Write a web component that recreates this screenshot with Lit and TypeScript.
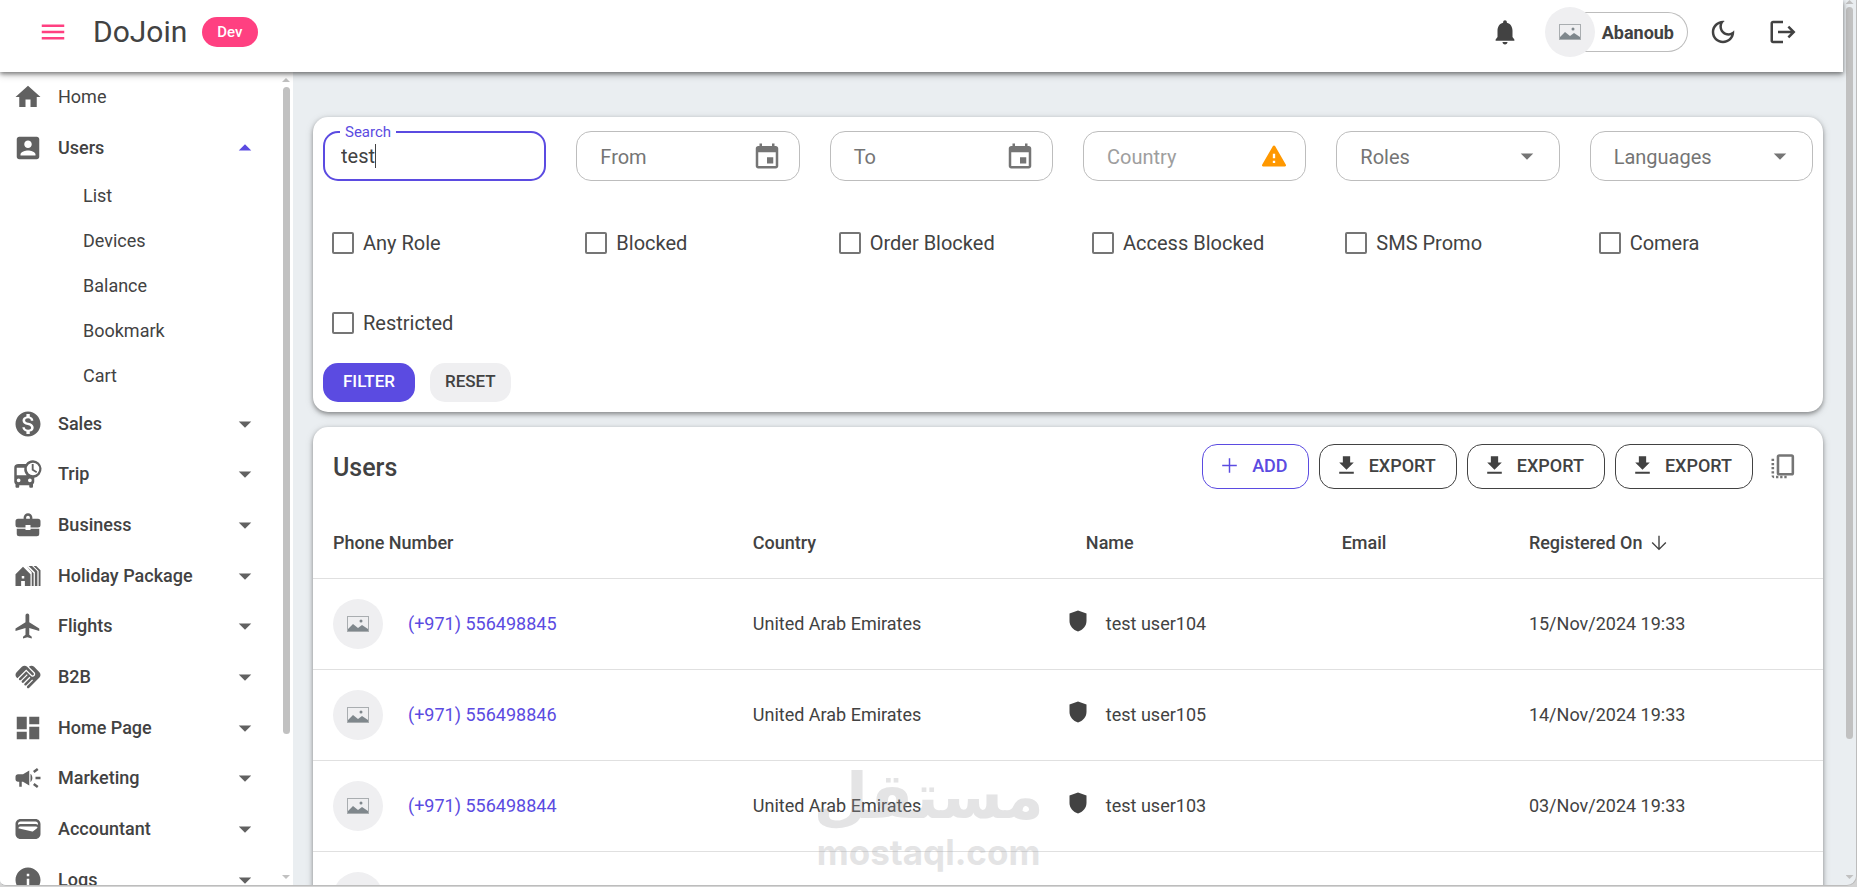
import { LitElement, html, css, svg } from "lit";
import { customElement } from "lit/decorators.js";
import { classMap } from "lit/directives/class-map.js";

const icons = {
  menu: svg`<path d="M3 18h18v-2H3v2zm0-5h18v-2H3v2zm0-7v2h18V6H3z"/>`,
  home: svg`<path d="M10 20v-6h4v6h5v-8h3L12 3 2 12h3v8z"/>`,
  users: svg`<path d="M3 5v14c0 1.1.89 2 2 2h14c1.1 0 2-.9 2-2V5c0-1.1-.9-2-2-2H5c-1.11 0-2 .9-2 2zm12 4c0 1.66-1.34 3-3 3s-3-1.34-3-3 1.34-3 3-3 3 1.34 3 3zm-9 8c0-2 4-3.1 6-3.1s6 1.1 6 3.1v1H6v-1z"/>`,
  sales: svg`<path d="M12 2C6.48 2 2 6.48 2 12s4.48 10 10 10 10-4.48 10-10S17.52 2 12 2zm1.41 16.09V20h-2.67v-1.93c-1.71-.36-3.16-1.46-3.27-3.4h1.96c.1 1.05.82 1.87 2.65 1.87 1.96 0 2.4-.98 2.4-1.59 0-.83-.44-1.61-2.67-2.14-2.48-.6-4.18-1.62-4.18-3.67 0-1.72 1.39-2.84 3.11-3.21V4h2.67v1.95c1.86.45 2.79 1.86 2.85 3.39H14.3c-.05-1.11-.64-1.87-2.22-1.87-1.5 0-2.4.68-2.4 1.64 0 .84.65 1.39 2.67 1.91s4.18 1.39 4.18 3.91c-.01 1.83-1.38 2.83-3.12 3.16z"/>`,
  trip: svg`<path d="M16 1a7 7 0 0 0-5.700 3H4.500C2.200 4 1 5 1 7v11c0 .9.400 1.600 1 2.200V22c0 .6.400 1 1 1h1c.6 0 1-.4 1-1v-1h8v1c0 .6.400 1 1 1h1c.6 0 1-.4 1-1v-1.800c.6-.6 1-1.300 1-2.200v-3.100A7 7 0 0 0 16 1zM4.500 18.500a1.500 1.500 0 1 1 0-3 1.500 1.500 0 0 1 0 3zM3 13V7h6.100a7 7 0 0 0 1.800 6zm10.500 5.500a1.500 1.500 0 1 1 0-3 1.500 1.500 0 0 1 0 3zM16 13a5 5 0 1 1 0-10 5 5 0 0 1 0 10zm.5-9H15v5l3.600 2.100.7-1.200-2.800-1.700z"/>`,
  business: svg`<path fill-rule="evenodd" d="M4 7h4.500V6a3.500 3.500 0 0 1 7 0v1H20a2 2 0 0 1 2 2v3a2 2 0 0 1-2 2h-6v-2h-4v2H4a2 2 0 0 1-2-2V9a2 2 0 0 1 2-2zm6.500 0h3V6a1.500 1.500 0 0 0-3 0zM3 15h7v1h4v-1h7v4a2 2 0 0 1-2 2H5a2 2 0 0 1-2-2z"/>`,
  holiday: svg`<path d="M2 10.500V20h4.500v-4h3v4H14v-9.500L8 4.500zM9 14H7v-2h2zM17.500 20V9l-5-5h2.800l4.200 4.200V20h-2zM16.500 20V9.800l-5.200-5.300h-.1L15 8.900V20zM20.500 20V8l-4-4h2.100L22 7.300V20z"/>`,
  flights: svg`<path d="M21 16v-2l-8-5V3.500c0-.83-.67-1.500-1.500-1.500S10 2.670 10 3.500V9l-8 5v2l8-2.500V19l-2 1.500V22l3.500-1 3.500 1v-1.500L13 19v-5.500l8 2.500z"/>`,
  b2b: svg`<path d="M16.480 10.410c-.39.39-1.040.39-1.430 0l-4.470-4.460-7.050 7.040-.66-.63c-1.170-1.170-1.170-3.070 0-4.240l4.240-4.240c1.170-1.170 3.070-1.170 4.240 0L16.480 9c.39.39.39 1.020 0 1.410zm.7-2.120c.78.78.78 2.050 0 2.830-1.270 1.270-2.610.22-2.830 0l-3.760-3.760-5.570 5.570c-.39.39-.39 1.020 0 1.410s1.020.39 1.420 0l4.620-4.620.71.71-4.620 4.620c-.39.39-.39 1.020 0 1.410s1.020.39 1.420 0l4.620-4.620.71.71-4.620 4.620c-.39.39-.39 1.020 0 1.410.39.39 1.020.39 1.410 0l4.620-4.620.71.71-4.620 4.620c-.39.39-.39 1.020 0 1.410.39.39 1.020.39 1.410 0l8.320-8.340c1.170-1.170 1.170-3.070 0-4.240l-4.240-4.240c-1.150-1.150-3.010-1.170-4.180-.06l4.470 4.470z"/>`,
  homepage: svg`<path d="M3 13h8V3H3v10zm0 8h8v-6H3v6zm10 0h8V11h-8v10zm0-18v6h8V3h-8z"/>`,
  marketing: svg`<path d="M18 11v2h4v-2h-4zM16 17.610c.96.71 2.210 1.650 3.200 2.390.4-.53.8-1.070 1.200-1.600-.99-.74-2.240-1.680-3.200-2.400-.4.540-.8 1.080-1.200 1.610zM20.400 5.600c-.4-.53-.8-1.070-1.200-1.600-.99.74-2.240 1.680-3.200 2.400.4.530.8 1.070 1.200 1.600.96-.72 2.210-1.650 3.200-2.400zM4 9c-1.100 0-2 .9-2 2v2c0 1.100.9 2 2 2h1v4h2v-4h1l5 3V6L8 9H4zm11.500 3c0-1.330-.58-2.530-1.500-3.350v6.690c.92-.81 1.500-2.010 1.500-3.340z"/>`,
  accountant: svg`<path d="M18 4H6C3.800 4 2 5.800 2 8v8c0 2.200 1.800 4 4 4h12c2.200 0 4-1.800 4-4V8c0-2.200-1.800-4-4-4zm-1.900 9.800c-.2.200-.5.300-.8.200L4.200 11.300C4.500 10.500 5.200 10 6 10h12c.7 0 1.300.4 1.700.9zM20 8.600c-.6-.4-1.300-.6-2-.6H6c-.7 0-1.400.2-2 .6V8c0-1.100.9-2 2-2h12c1.100 0 2 .9 2 2z"/>`,
  info: svg`<path d="M12 2C6.480 2 2 6.480 2 12s4.480 10 10 10 10-4.480 10-10S17.520 2 12 2zm1 15h-2v-6h2v6zm0-8h-2V7h2v2z"/>`,
  down: svg`<path d="M7 10l5 5 5-5z"/>`,
  up: svg`<path d="M7 14l5-5 5 5z"/>`,
  bell: svg`<path d="M12 22c1.100 0 2-.9 2-2h-4c0 1.100.89 2 2 2zm6-6v-5c0-3.070-1.640-5.640-4.500-6.320V4c0-.83-.67-1.500-1.500-1.500s-1.500.67-1.500 1.500v.68C7.630 5.360 6 7.920 6 11v5l-1.500 2v1h15v-1l-1.500-2z"/>`,
  moon: svg`<path d="M9.370 5.510c-.18.640-.27 1.310-.27 1.990 0 4.080 3.320 7.400 7.400 7.400.68 0 1.350-.09 1.990-.27C17.450 17.190 14.930 19 12 19c-3.860 0-7-3.140-7-7 0-2.930 1.810-5.450 4.370-6.490zM12 3c-4.970 0-9 4.030-9 9s4.030 9 9 9 9-4.030 9-9c0-.46-.04-.92-.1-1.360-.98 1.370-2.580 2.260-4.400 2.260-2.980 0-5.400-2.420-5.400-5.400 0-1.810.89-3.420 2.260-4.400-.44-.06-.9-.1-1.360-.1z"/>`,
  logout: svg`<path d="M17 7l-1.410 1.410L18.170 11H8v2h10.170l-2.580 2.580L17 17l5-5zM4 5h8V3H4c-1.100 0-2 .9-2 2v14c0 1.100.9 2 2 2h8v-2H4V5z"/>`,
  calendar: svg`<path d="M19 4h-1V2h-2v2H8V2H6v2H5c-1.110 0-1.990.9-1.990 2L3 20c0 1.100.89 2 2 2h14c1.100 0 2-.9 2-2V6c0-1.100-.9-2-2-2zm0 16H5V9h14v11zm-7-7h5v5h-5z"/>`,
  warning: svg`<path d="M2.700 21h18.600c.8 0 1.200-.8.900-1.500L12.900 3.500c-.4-.7-1.400-.7-1.800 0L1.800 19.500c-.3.700.1 1.500.9 1.500zM13 18h-2v-2h2v2zm0-4h-2v-4h2v4z"/>`,
  add: svg`<path d="M19 12.700h-6.300V19h-1.400v-6.300H5v-1.400h6.300V5h1.400v6.300H19z"/>`,
  download: svg`<path d="M19 9h-3.500V3h-7v6H5l7 7 7-7zM5 18v2h14v-2H5z"/>`,
  columns: svg`<rect x="8.500" y="3.500" width="11.500" height="14.500" rx="1" fill="none" stroke="currentColor" stroke-width="2"/><path d="M3.500 6h2v1.800h-2zM3.500 9.200h2V11h-2zM3.500 12.400h2v1.800h-2zM3.500 15.600h2v1.800h-2zM3.500 19h2v2c-1.100 0-2-.9-2-2zM7 19.200h1.800V21H7zM10.200 19.200H12V21h-1.800zM13.400 19.200h1.800V21h-1.800z"/>`,
  arrow: svg`<path d="M20 12l-1.060-1.060-6.190 6.190V4h-1.500v13.130l-6.190-6.190L4 12l8 8 8-8z"/>`,
  shield: svg`<path d="M12 1.500 3.500 4.500V12c0 5 3.600 9 8.500 10.500 4.900-1.500 8.500-5.500 8.500-10.500V4.500z"/>`,
};
type IconName = keyof typeof icons;

const icon = (name: IconName, cls = "") =>
  html`<svg class="icon ${cls}" viewBox="0 0 24 24" aria-hidden="true">${icons[name]}</svg>`;

const picture = () => html`<span class="avatar">
  <svg class="picture" viewBox="0 0 22 16" aria-hidden="true">
    <rect x="0.500" y="0.500" width="21" height="15" fill="none" stroke="#a9adb0" />
    <path d="M1 15v-2l5-5 5 4 4-3 6 4v2z" fill="#7f878c" />
    <circle cx="14" cy="5" r="1.500" fill="#7f878c" />
  </svg>
</span>`;

interface Group { label: string; icon: IconName; children?: string[]; leaf?: boolean }
const groups: Group[] = [
  { label: "Home", icon: "home", leaf: true },
  { label: "Users", icon: "users", children: ["List", "Devices", "Balance", "Bookmark", "Cart"] },
  { label: "Sales", icon: "sales" },
  { label: "Trip", icon: "trip" },
  { label: "Business", icon: "business" },
  { label: "Holiday Package", icon: "holiday" },
  { label: "Flights", icon: "flights" },
  { label: "B2B", icon: "b2b" },
  { label: "Home Page", icon: "homepage" },
  { label: "Marketing", icon: "marketing" },
  { label: "Accountant", icon: "accountant" },
  { label: "Logs", icon: "info" },
];

const flags = ["Any Role", "Blocked", "Order Blocked", "Access Blocked", "SMS Promo", "Comera", "Restricted"];

const users = [
  { phone: "(+971) 556498845", country: "United Arab Emirates", name: "test user104", date: "15/Nov/2024 19:33" },
  { phone: "(+971) 556498846", country: "United Arab Emirates", name: "test user105", date: "14/Nov/2024 19:33" },
  { phone: "(+971) 556498844", country: "United Arab Emirates", name: "test user103", date: "03/Nov/2024 19:33" },
  { phone: "", country: "", name: "", date: "" },
];

@customElement("app-root")
export class AppRoot extends LitElement {
  static styles = css`
    :host {
      display: flex;
      flex-direction: column;
      box-sizing: border-box;
      position: relative;
      height: 100vh;
      overflow: hidden;
      padding-bottom: 1px;
      background: #d4d4d4;
      color: #424242;
      font: 400 18px/24px Roboto, "Open Sans", sans-serif;
    }
    * { box-sizing: border-box; }
    button, input, select { font: inherit; color: inherit; margin: 0; }
    button { border: 0; background: none; padding: 0; cursor: pointer; }
    a { color: inherit; text-decoration: none; }
    ul { list-style: none; margin: 0; padding: 0; }
    .icon { width: 30px; height: 30px; fill: currentColor; flex: none; display: block; }

    .shell {
      flex: 1;
      min-height: 0;
      display: flex;
      overflow: hidden;
      border: solid #bdbdbd;
      border-width: 0 1px 1px 0;
      border-radius: 0 0 10px 6px;
      background: #eaeef1;
    }
    .page { flex: 1; min-width: 0; display: flex; flex-direction: column; }
    .header {
      display: flex;
      align-items: center;
      flex: none;
      height: 72px;
      padding: 0 45px 8px 38px;
      background: #fff;
      box-shadow: 0 2px 4px rgba(0, 0, 0, 0.4), 0 3px 8px rgba(0, 0, 0, 0.2);
      z-index: 2;
    }
    .burger { color: #ff4081; }
    .brand { margin: 0 15px 0 25px; font-size: 30px; line-height: 40px; font-weight: 400; }
    .chip {
      padding: 0 15px;
      border-radius: 15px;
      background: #ff4081;
      color: #fff;
      font-size: 15px;
      line-height: 30px;
      font-weight: 500;
    }
    .actions { margin-left: auto; display: flex; align-items: center; }
    .profile { display: flex; align-items: center; margin: 0 20px 0 25px; font-weight: 700; }
    .profile-name {
      height: 40px;
      line-height: 39px;
      margin-left: -20px;
      padding: 0 13px 0 27px;
      border: 1px solid #bdbdbd;
      border-left: 0;
      border-radius: 0 20px 20px 0;
    }
    .logout { margin-left: 30px; }
    .avatar {
      display: flex;
      align-items: center;
      justify-content: center;
      flex: none;
      width: 50px;
      height: 50px;
      border-radius: 50%;
      background: #efeff1;
      z-index: 1;
    }
    .picture { width: 22px; height: 16px; }

    .body { flex: 1; min-height: 0; display: flex; }
    .sidebar {
      display: flex;
      width: 293px;
      flex: none;
      overflow: hidden;
      background: #fff;
    }
    .menu { flex: 1; }
    .row {
      display: flex;
      align-items: center;
      width: 100%;
      height: 51px;
      padding: 0 19px 0 13px;
      font-weight: 500;
      text-align: left;
    }
    .group:nth-child(3n + 1) .row { height: 50px; }
    .row.leaf { font-weight: 400; }
    .row-icon { color: #616161; margin-right: 15px; }
    .caret { margin-left: auto; color: #616161; }
    .caret.open { color: #5b4be1; }
    .child { display: block; padding-left: 83px; line-height: 45px; }

    .scroll {
      display: flex;
      flex-direction: column;
      align-items: center;
      justify-content: space-between;
      flex: none;
    }
    .side-scroll { width: 14px; padding: 6px 0; }
    .page-scroll { width: 13px; padding: 0 0 6px; }
    .thumb { width: 7px; border-radius: 4px; background: #c1c1c1; }
    .side-scroll .thumb { flex: 0 0 80.8%; margin: 5px 0 auto; }
    .page-scroll .thumb { flex: 0 0 83.3%; margin: 3px 0 auto; }
    .tip { width: 8px; height: 4px; background: #c1c1c1; }
    .tip-up { clip-path: polygon(50% 0, 100% 100%, 0 100%); }
    .tip-down { clip-path: polygon(0 0, 100% 0, 50% 100%); }

    .main {
      flex: 1;
      min-width: 0;
      display: flex;
      flex-direction: column;
      gap: 15px;
      padding: 45px 20px 0;
      overflow: hidden;
    }
    .card {
      flex: none;
      border-radius: 15px;
      background: #fff;
      box-shadow: 0 2px 4px rgba(0, 0, 0, 0.35), 0 2px 8px rgba(0, 0, 0, 0.15);
    }
    .filters { padding: 14px 10px 10px; }
    .fields, .flags { display: grid; grid-template-columns: repeat(6, minmax(0, 1fr)); column-gap: 30px; }
    .fields { margin-bottom: 22px; }
    .field {
      display: grid;
      grid-template-columns: minmax(0, 1fr) auto;
      align-items: center;
      position: relative;
      height: 50px;
      padding: 0 17px 0 23px;
      border: 1px solid #bdbdbd;
      border-radius: 15px;
      color: #757575;
      font-size: 20px;
    }
    .field.active { border: 2px solid #5b4be1; padding: 0 16px; color: #424242; }
    .field.disabled { color: #9e9e9e; }
    .label { grid-area: 1 / 1; padding-top: 2px; pointer-events: none; }
    .legend {
      position: absolute;
      top: -11px;
      left: 15px;
      padding: 0 5px;
      background: #fff;
      color: #5b4be1;
      font-size: 15px;
      line-height: 20px;
    }
    .control { grid-area: 1 / 1; width: 100%; height: 28px; padding: 0; border: 0; outline: 0; background: none; appearance: none; }
    .active .control { caret-color: transparent; }
    .cursor { position: absolute; left: 50px; top: 11px; width: 1px; height: 24px; background: #424242; }
    .warning { color: #ff9800; width: 28px; height: 28px; }
    .flag { display: flex; align-items: center; height: 80px; padding-left: 9px; gap: 9px; font-size: 20px; }
    .box { appearance: none; width: 22px; height: 22px; border: 2px solid #757575; border-radius: 2px; }
    .buttons { display: flex; gap: 15px; }
    .filter-button {
      height: 39px;
      padding: 0 20px;
      border-radius: 15px;
      background: #5b4be1;
      color: #fff;
      font-size: 17px;
      line-height: 37px;
      padding-bottom: 2px;
      font-weight: 500;
    }
    .filter-button.reset { padding: 0 15px 2px; background: #efeff1; color: #424242; }

    .toolbar { display: flex; align-items: center; gap: 10px; padding: 17px 25px 0 20px; }
    .title { margin: 0 auto 0 0; padding-top: 2px; font-size: 25px; line-height: 32px; font-weight: 500; }
    .outlined {
      display: flex;
      align-items: center;
      gap: 10px;
      height: 45px;
      padding: 0 20px 2px 14px;
      border: 1px solid #424242;
      border-radius: 15px;
      font-weight: 500;
    }
    .outlined .icon { width: 25px; height: 25px; }
    .add { color: #5b4be1; border-color: #5b4be1; }
    .columns { color: #757575; padding-left: 4px; }
    .columns .icon { width: 31px; height: 31px; }

    .table { width: 100%; border-collapse: collapse; table-layout: fixed; }
    .table th { height: 89px; padding: 36px 20px 16px; text-align: left; font-weight: 500; border-bottom: 1px solid #e0e0e0; }
    .table td { height: 91px; padding: 0 20px; border-bottom: 1px solid #e0e0e0; }
    .table .name-head { padding-left: 36px; }
    .c-phone { width: 27.8%; }
    .c-country { width: 21%; }
    .c-name { width: 18%; }
    .c-email { width: 12.4%; }
    .cell { display: flex; align-items: center; }
    .phone { color: #5b4be1; gap: 25px; }
    .person { gap: 20px; }
    .sort { gap: 6px; }
    .sort .icon { width: 22px; height: 22px; }
    .person .icon { width: 24px; height: 24px; margin: 0 -4px 6px; }

    .watermark {
      position: absolute;
      left: 44%;
      bottom: 15px;
      width: 223px;
      display: flex;
      flex-direction: column;
      align-items: center;
      color: #a0a0a4;
      opacity: 0.28;
      font-weight: 700;
      white-space: nowrap;
      pointer-events: none;
    }
    .wm-ar { font-family: "DejaVu Sans", sans-serif; font-size: 63px; line-height: 70px; }
    .wm-en { font-family: Inter, sans-serif; font-size: 35px; line-height: 40px; }
  `;

  firstUpdated() {
    const search = this.renderRoot.querySelector<HTMLInputElement>("#search");
    search?.focus();
    search?.setSelectionRange(search.value.length, search.value.length);
  }

  private renderGroup(g: Group) {
    const inner = html`${icon(g.icon, "row-icon")}<span>${g.label}</span>`;
    if (g.leaf) return html`<li class="group"><a class="row leaf" href="#">${inner}</a></li>`;
    const open = !!g.children;
    return html`<li class="group">
      <button class="row" aria-expanded=${open}>
        ${inner}
        <svg class=${classMap({ icon: true, caret: true, open })} viewBox="0 0 24 24" aria-hidden="true">${open ? icons.up : icons.down}</svg>
      </button>
      ${open ? html`<ul>${g.children!.map((c) => html`<li><a class="child" href="#">${c}</a></li>`)}</ul>` : ""}
    </li>`;
  }

  private renderScroll(cls: string) {
    return html`<div class="scroll ${cls}" aria-hidden="true">
      <span class="tip tip-up"></span><span class="thumb"></span><span class="tip tip-down"></span>
    </div>`;
  }

  private renderFilters() {
    return html`<form class="card filters" @submit=${(e: Event) => e.preventDefault()}>
      <div class="fields">
        <div class="field active">
          <label class="legend" for="search">Search</label>
          <input class="control" id="search" type="text" value="test" autocomplete="off" />
          <span class="cursor"></span>
        </div>
        ${["From", "To"].map(
          (n) => html`<div class="field">
            <label class="label" for=${n}>${n}</label>
            <input class="control" id=${n} type="text" />${icon("calendar")}
          </div>`
        )}
        <div class="field disabled">
          <label class="label" for="country">Country</label>
          <input class="control" id="country" type="text" disabled />${icon("warning", "warning")}
        </div>
        ${["Roles", "Languages"].map(
          (n) => html`<div class="field">
            <label class="label" for=${n}>${n}</label>
            <select class="control" id=${n}><option value=""></option></select>${icon("down")}
          </div>`
        )}
      </div>
      <div class="flags">
        ${flags.map((f) => html`<label class="flag"><input class="box" type="checkbox" />${f}</label>`)}
      </div>
      <div class="buttons">
        <button class="filter-button" type="submit">FILTER</button>
        <button class="filter-button reset" type="reset">RESET</button>
      </div>
    </form>`;
  }

  private renderTable() {
    return html`<section class="card">
      <div class="toolbar">
        <h2 class="title">Users</h2>
        <button class="outlined add">${icon("add")}ADD</button>
        ${[0, 1, 2].map(() => html`<button class="outlined">${icon("download")}EXPORT</button>`)}
        <button class="columns" aria-label="Columns">${icon("columns")}</button>
      </div>
      <table class="table">
        <colgroup>
          <col class="c-phone" /><col class="c-country" /><col class="c-name" /><col class="c-email" /><col />
        </colgroup>
        <thead>
          <tr>
            <th>Phone Number</th>
            <th>Country</th>
            <th class="name-head">Name</th>
            <th>Email</th>
            <th><span class="cell sort">Registered On${icon("arrow")}</span></th>
          </tr>
        </thead>
        <tbody>
          ${users.map(
            (u) => html`<tr>
              <td><a class="cell phone" href="#">${picture()}${u.phone}</a></td>
              <td>${u.country}</td>
              <td>${u.name ? html`<span class="cell person">${icon("shield")}${u.name}</span>` : ""}</td>
              <td></td>
              <td>${u.date}</td>
            </tr>`
          )}
        </tbody>
      </table>
    </section>`;
  }

  render() {
    return html`
      <div class="shell">
        <div class="page">
          <header class="header">
            <button class="burger" aria-label="Menu">${icon("menu")}</button>
            <h1 class="brand">DoJoin</h1>
            <span class="chip">Dev</span>
            <div class="actions">
              <button aria-label="Notifications">${icon("bell")}</button>
              <button class="profile">${picture()}<span class="profile-name">Abanoub</span></button>
              <button aria-label="Dark mode">${icon("moon")}</button>
              <button class="logout" aria-label="Log out">${icon("logout")}</button>
            </div>
          </header>
          <div class="body">
            <nav class="sidebar">
              <ul class="menu">${groups.map((g) => this.renderGroup(g))}</ul>
              ${this.renderScroll("side-scroll")}
            </nav>
            <main class="main">${this.renderFilters()} ${this.renderTable()}</main>
          </div>
        </div>
        ${this.renderScroll("page-scroll")}
      </div>
      <div class="watermark" aria-hidden="true"><span class="wm-ar">مستقل</span><span class="wm-en">mostaql.com</span></div>
    `;
  }
}
